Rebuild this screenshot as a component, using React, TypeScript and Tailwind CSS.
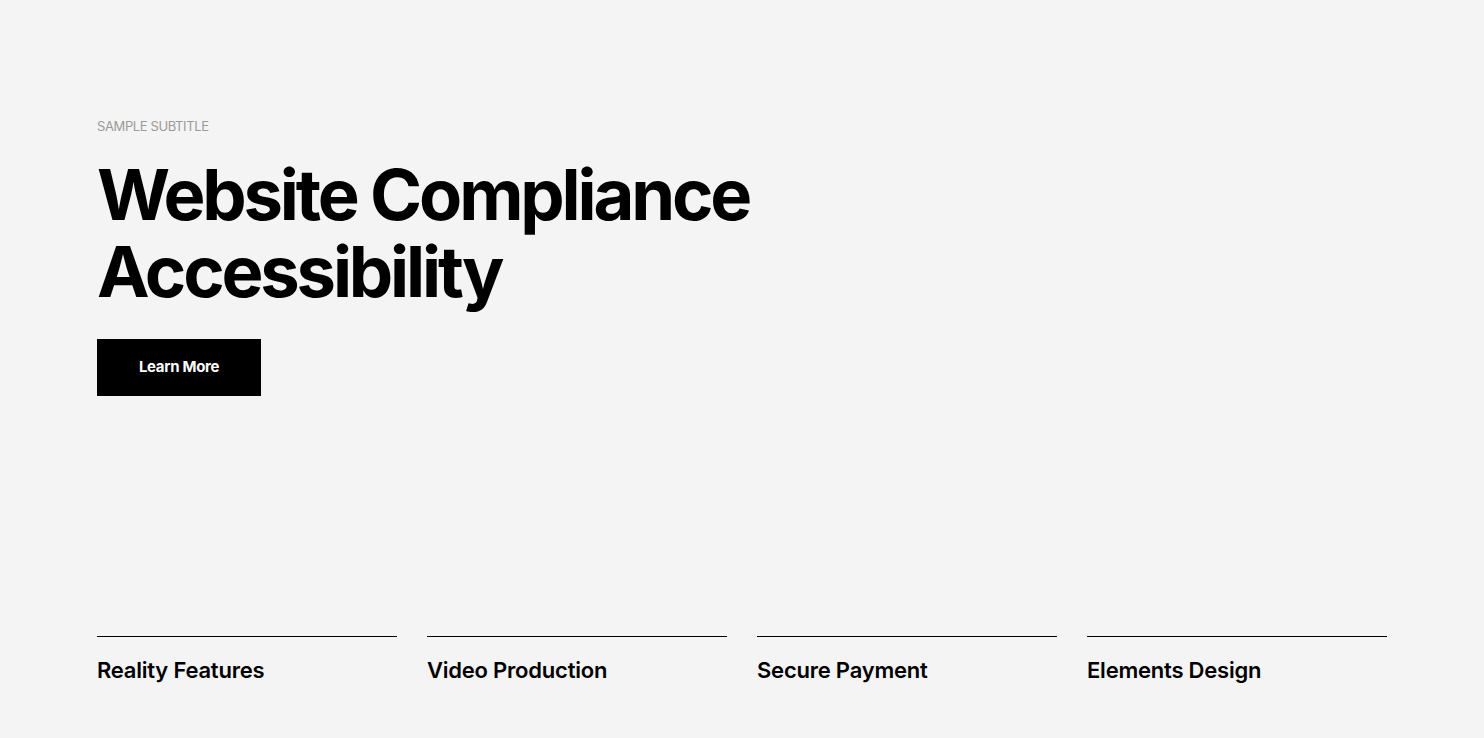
import React from "react";

const features = ["Reality Features", "Video Production", "Secure Payment", "Elements Design"];

export default function App() {
  return (
    <div
      className="min-h-[738px] w-full bg-[#f4f4f4] text-black"
      style={{ fontFamily: "Inter, 'Noto Sans', sans-serif" }}
    >
      <div className="mx-auto w-[1290px] pt-[118px]">
        <p className="text-[13px] leading-4 uppercase tracking-[-0.03em] text-[#9a9a9a]">
          Sample Subtitle
        </p>

        <h1 className="mt-[22px] text-[70.5px] font-bold leading-[77px] tracking-[-0.045em]">
          <span className="block">Website Compliance</span>
          <span className="block">Accessibility</span>
        </h1>

        <button className="mt-[29px] h-[57px] w-[164px] bg-black text-[15px] font-bold tracking-[-0.02em] text-white">
          Learn More
        </button>

        {/* feature row */}
        <div className="mt-[240px] grid grid-cols-4 gap-[30px]">
          {features.map((f) => (
            <div key={f} className="border-t border-black pt-[19px]">
              <h3 className="text-[22px] font-semibold leading-7 tracking-[-0.01em]">{f}</h3>
            </div>
          ))}
        </div>
      </div>
    </div>
  );
}
